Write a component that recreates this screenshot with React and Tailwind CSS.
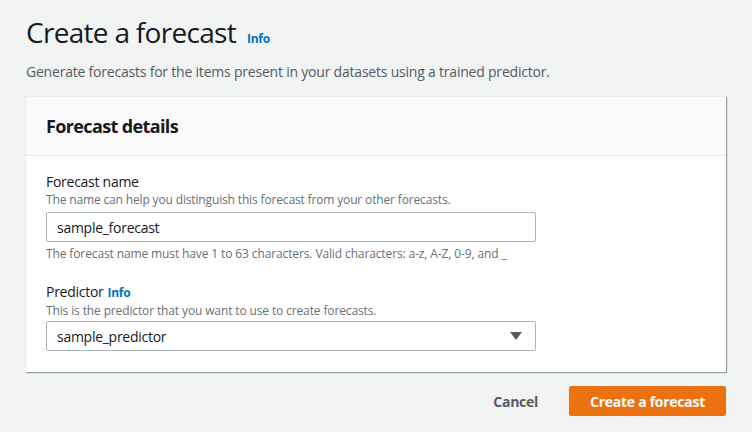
export default function App() {
  return (
    <div className="w-[752px] h-[432px] bg-[#f2f3f3] overflow-hidden text-[#16191f] tracking-[-0.017em]" style={{ fontFamily: '"Open Sans", "Noto Sans", sans-serif' }}>
      <div className="pl-[25px] pr-[26px] pt-[14px]">
        <div className="flex items-baseline gap-[11px] pl-[1px]">
          <h1 className="text-[28px] leading-[36px] font-normal text-[#16191f] tracking-[-0.025em]">Create a forecast</h1>
          <span className="text-[12px] font-bold text-[#0073bb]">Info</span>
        </div>
        <p className="mt-[12px] pl-[1px] text-[14px] leading-[20px] text-[#545b64] tracking-[-0.015em]">Generate forecasts for the items present in your datasets using a trained predictor.</p>
        <div className="mt-[14px] bg-white border-t border-l border-[#eaeded] shadow-[1px_1px_1px_0_rgba(0,28,36,0.4)]">
          <div className="h-[59px] bg-[#fafafa] border-b border-[#eaeded] flex items-center px-[20px]">
            <h2 className="text-[18px] font-bold leading-[22px] tracking-[-0.035em]">Forecast details</h2>
          </div>
          <div className="px-[20px] pt-[16px] pb-[21px] w-[530px]">
            <div className="text-[14px] leading-[20px]">Forecast name</div>
            <div className="text-[12px] leading-[16px] text-[#687078] tracking-[-0.15px]">The name can help you distinguish this forecast from your other forecasts.</div>
            <div className="mt-[4px] h-[30px] border border-[#aab7b8] rounded-[2px] flex items-center px-[10px] text-[14px]">sample_forecast</div>
            <div className="mt-[4px] text-[12px] leading-[16px] text-[#687078] whitespace-nowrap tracking-[-0.12px]">The forecast name must have 1 to 63 characters. Valid characters: a-z, A-Z, 0-9, and _</div>
            <div className="mt-[20px] flex items-baseline gap-[4px] text-[14px] leading-[20px]">
              <span>Predictor</span>
              <span className="text-[12px] font-bold text-[#0073bb]">Info</span>
            </div>
            <div className="text-[12px] leading-[16px] text-[#687078] tracking-[-0.13px]">This is the predictor that you want to use to create forecasts.</div>
            <div className="mt-[2px] h-[30px] border border-[#aab7b8] rounded-[2px] flex items-center justify-between pl-[10px] pr-[13px] text-[14px]">
              <span>sample_predictor</span>
              <svg width="12" height="8" viewBox="0 0 12 8"><path d="M0 0 L12 0 L6 8 Z" fill="#545b64" /></svg>
            </div>
          </div>
        </div>
        <div className="mt-[14px] flex justify-end items-center">
          <span className="text-[14px] font-bold text-[#545b64] mr-[31px]">Cancel</span>
          <div className="w-[157px] h-[30px] bg-[#ec7211] rounded-[2px] flex items-center justify-center text-white text-[14px] font-bold">Create a forecast</div>
        </div>
      </div>
    </div>
  );
}
